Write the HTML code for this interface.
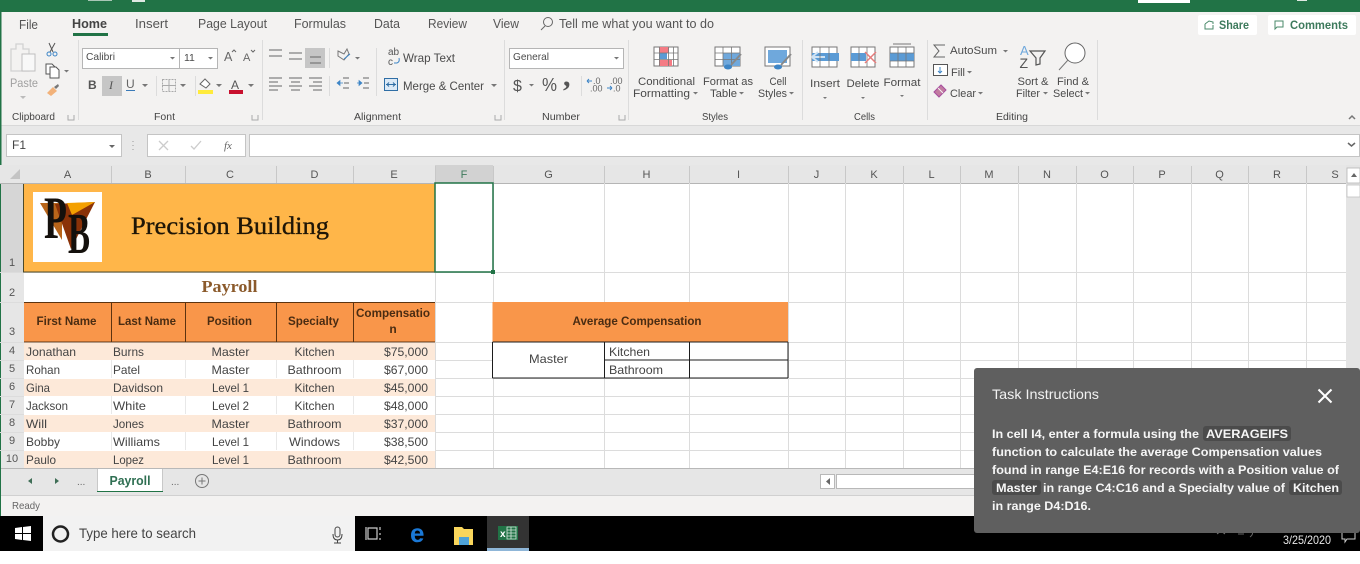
<!DOCTYPE html>
<html><head><meta charset="utf-8"><title>Payroll</title>
<style>
html,body{margin:0;padding:0;background:#fff;width:1360px;height:564px;overflow:hidden}
svg{display:block;position:absolute;left:0;top:0}
text{font-family:"Liberation Sans",Arial,sans-serif;font-size:12px;fill:#444}
.t{font-size:12.5px;fill:#555}
.r{font-size:11px;fill:#4a4a4a}
.g{font-size:10px;fill:#444}
.h{font-size:11px;fill:#555;text-anchor:middle}
.n{font-size:11px;fill:#555;text-anchor:middle}
.c{font-size:12px;fill:#444}
.m{text-anchor:middle}
.e{text-anchor:end}
.b{font-weight:bold}
.th{font-size:12px;font-weight:bold;fill:#4a2c12;text-anchor:middle}
.w{fill:#f6f6f6;font-size:12px;font-weight:bold}
.ic{fill:none;stroke:#666;stroke-width:1}
.ar{fill:#777}
</style></head><body>
<svg width="1360" height="564" viewBox="0 0 1360 564" shape-rendering="geometricPrecision">
<rect width="1360" height="564" fill="#fff"/>
<!-- title bar -->
<rect width="1360" height="12" fill="#217346"/>
<rect x="1138" y="0" width="52" height="3" fill="#fff"/>
<rect x="88" y="0" width="24" height="1" fill="#a9c7b6"/>
<rect x="132" y="0" width="13" height="2" fill="#dfe9e3"/>
<rect x="1297" y="0" width="10" height="1" fill="#dfe9e3"/>
<!-- ribbon -->
<rect x="0" y="12" width="1360" height="113" fill="#f3f2f1"/>
<rect x="0" y="125" width="1360" height="40" fill="#e8e8e8"/>
<rect x="0" y="125" width="1360" height="1" fill="#d8d8d8"/>
<rect x="0" y="12" width="1.5" height="504" fill="#217346"/>
<text class="t" x="19" y="29" textLength="19" lengthAdjust="spacingAndGlyphs">File</text>
<text class="t b" x="72" y="28" textLength="35" lengthAdjust="spacingAndGlyphs" style="fill:#444">Home</text>
<rect x="73" y="33" width="35" height="3" fill="#217346"/>
<text class="t" x="135" y="28" textLength="33" lengthAdjust="spacingAndGlyphs">Insert</text>
<text class="t" x="198" y="28" textLength="69" lengthAdjust="spacingAndGlyphs">Page Layout</text>
<text class="t" x="294" y="28" textLength="52" lengthAdjust="spacingAndGlyphs">Formulas</text>
<text class="t" x="374" y="28" textLength="26" lengthAdjust="spacingAndGlyphs">Data</text>
<text class="t" x="428" y="28" textLength="39" lengthAdjust="spacingAndGlyphs">Review</text>
<text class="t" x="493" y="28" textLength="26" lengthAdjust="spacingAndGlyphs">View</text>
<circle cx="548" cy="22" r="4.500" class="ic"/><path d="M545 26l-4 4" class="ic"/>
<text class="t" x="559" y="28" textLength="155" lengthAdjust="spacingAndGlyphs">Tell me what you want to do</text>
<!-- share/comments -->
<rect x="1198" y="15" width="59" height="20" rx="2" fill="#fff"/>
<path d="M1205 24l4-3 4 1v2M1205 24v5h8v-4" fill="none" stroke="#4a8a6a"/>
<text class="r b" x="1219" y="29" textLength="30" lengthAdjust="spacingAndGlyphs" style="fill:#3d7a5c;font-size:11.500px">Share</text>
<rect x="1268" y="15" width="88" height="20" rx="2" fill="#fff"/>
<path d="M1275 21h8v6h-6l-2 2z" fill="none" stroke="#4a8a6a"/>
<text class="r b" x="1290" y="29" textLength="58" lengthAdjust="spacingAndGlyphs" style="fill:#3d7a5c;font-size:11.500px">Comments</text>
<!-- separators -->
<g fill="#dcdcdc">
<rect x="78" y="40" width="1" height="80"/><rect x="262" y="40" width="1" height="80"/><rect x="504" y="40" width="1" height="80"/>
<rect x="628" y="40" width="1" height="80"/><rect x="802" y="40" width="1" height="80"/><rect x="927" y="40" width="1" height="80"/><rect x="1097" y="40" width="1" height="80"/>
<rect x="329" y="48" width="1" height="20"/><rect x="329" y="76" width="1" height="20"/><rect x="376" y="48" width="1" height="48"/>
<rect x="156" y="76" width="1" height="20"/><rect x="195" y="76" width="1" height="20"/><rect x="581" y="76" width="1" height="20"/>
</g>
<!-- clipboard -->
<path d="M11 49h5v-5h7v5h6v22H11z" fill="none" stroke="#d2d2d2" stroke-width="1.300"/>
<rect x="22" y="54" width="13" height="17" fill="#f8f8f8" stroke="#bfbfbf"/>
<text class="r" x="10" y="87" textLength="28" lengthAdjust="spacingAndGlyphs" style="fill:#a0a0a0;font-size:12px">Paste</text>
<path d="M20 96h6l-3 3z" fill="#bbb"/>
<path d="M49 43l4 9M55 43l-5 9" stroke="#555" fill="none"/><circle cx="49" cy="54" r="2" fill="none" stroke="#3d85c6"/><circle cx="55" cy="54" r="2" fill="none" stroke="#3d85c6"/>
<path d="M46 64h6l3 3v7h-9z" fill="#fff" stroke="#555"/><path d="M50 67h6l3 3v8h-9z" fill="#fff" stroke="#555"/>
<path d="M64 70h5l-2.500 2.500z" class="ar"/>
<path d="M47 93l6-6 4 4-6 5z" fill="#f2b27a"/><path d="M54 87l4-3 1 2-3 3z" fill="#777"/>
<text class="g" x="12" y="120" textLength="43" lengthAdjust="spacingAndGlyphs">Clipboard</text>
<path d="M68 115v5h6v-5" fill="none" stroke="#aaa"/>
<!-- font -->
<rect x="82.500" y="48.500" width="135" height="20" fill="#fff" stroke="#b5b5b5"/>
<rect x="179" y="49" width="1" height="19" fill="#b5b5b5"/>
<text class="r" x="86" y="60" textLength="29" lengthAdjust="spacingAndGlyphs" style="font-size:10.500px">Calibri</text>
<text class="r" x="184" y="61" style="font-size:10.500px">11</text>
<path d="M170 57h5l-2.500 2.500zM208 57h5l-2.500 2.500z" class="ar"/>
<text x="224" y="61" style="font-size:12.500px;fill:#666">A</text><path d="M232 52l2-2 2 2" class="ic"/>
<text x="243" y="61" style="font-size:11px;fill:#666">A</text><path d="M251 50l2 2 2-2" class="ic"/>
<text x="88" y="89" class="b" style="font-size:12px;fill:#555">B</text>
<rect x="102" y="76" width="20" height="20" fill="#c6c6c6"/>
<text x="109" y="89" style="font-size:12px;font-style:italic;font-family:'Liberation Serif',serif;fill:#555">I</text>
<text x="126" y="88" style="font-size:12px;fill:#666">U</text><rect x="126" y="90" width="9" height="1" fill="#3a7ab8"/>
<path d="M142 84h6l-3 3zM180 84h6l-3 3zM216 84h6l-3 3zM248 84h6l-3 3z" class="ar"/>
<rect x="162.500" y="79.500" width="13" height="12" fill="none" stroke="#aaa" stroke-dasharray="2 1"/><path d="M169 80v12M162 85.500h14" stroke="#aaa"/>
<rect x="198" y="90" width="15" height="4" fill="#ffeb3b"/>
<path d="M200 84l5-5 5 5-4 4z" fill="#fff" stroke="#666"/>
<text x="231" y="89" style="font-size:12px;fill:#555">A</text><rect x="229" y="90" width="14" height="4" fill="#c8102e"/>
<text class="g m" x="164.500" y="120" textLength="21" lengthAdjust="spacingAndGlyphs">Font</text>
<path d="M252 115v5h6v-5" fill="none" stroke="#aaa"/>
<!-- alignment -->
<rect x="305" y="48" width="20" height="20" fill="#c6c6c6"/>
<g stroke="#666" stroke-width="1.100">
<path d="M269 50h13M269 56h13M289 53h13M289 59h13M310 57h11M310 63h11"/>
<path d="M269 78h13M269 82h9M269 86h13M269 90h9"/>
<path d="M289 78h13M291 82h9M289 86h13M291 90h9"/>
<path d="M309 78h13M313 82h9M309 86h13M313 90h9"/>
<path d="M343 78h6M344 83h5M343 88h6M363 78h6M364 83h5M363 88h6"/>
</g>
<path d="M337 83l3-2.500v5zM340 83h3M357 83h3M362 83l-3-2.500v5z" fill="#3d85c6" stroke="#3d85c6" stroke-width=".7"/>
<path d="M338 51l6 3 3-5 2 5-5 6-6-4z" fill="none" stroke="#777"/><path d="M344 59l6-5" stroke="#3d85c6"/>
<path d="M355 57h5l-2.500 2.500z" class="ar"/>
<text x="388" y="55" style="font-size:10px;fill:#555">ab</text><text x="388" y="65" style="font-size:10px;fill:#555">c</text>
<path d="M394 63h3q3-1 2-5" fill="none" stroke="#3d85c6"/>
<text class="r" x="403" y="62" textLength="52" lengthAdjust="spacingAndGlyphs" style="font-size:12px">Wrap Text</text>
<rect x="384.500" y="78.500" width="13" height="12" fill="#dbe9f6" stroke="#2f6ea5"/><path d="M386 84.500h10M387 84.500l2-2M387 84.500l2 2M395 84.500l-2-2M395 84.500l-2 2" stroke="#2f6ea5" fill="none"/>
<text class="r" x="403" y="90" textLength="81" lengthAdjust="spacingAndGlyphs" style="font-size:12px">Merge &amp; Center</text>
<path d="M491 84h6l-3 3z" class="ar"/>
<text class="g m" x="377.500" y="120" textLength="47" lengthAdjust="spacingAndGlyphs">Alignment</text>
<path d="M495 115v5h6v-5" fill="none" stroke="#aaa"/>
<!-- number -->
<rect x="509.500" y="48.500" width="114" height="20" fill="#fff" stroke="#b5b5b5"/>
<text class="r" x="513" y="60" textLength="36" lengthAdjust="spacingAndGlyphs" style="font-size:10.500px">General</text>
<path d="M614 57h5l-2.500 2.500z" class="ar"/>
<text x="513" y="91" style="font-size:16px;fill:#555">$</text>
<path d="M529 84h5l-2.500 2.500z" class="ar"/>
<text x="542" y="91" style="font-size:18px;fill:#555" textLength="15" lengthAdjust="spacingAndGlyphs">%</text>
<text x="563" y="86" class="b" style="font-size:30px;fill:#555;font-family:'Liberation Serif',serif">,</text>
<text x="593" y="84" style="font-size:9px;fill:#666">.0</text><text x="590" y="91.500" style="font-size:9px;fill:#666">.00</text>
<path d="M587 81h5M587 81l2-2M587 81l2 2" stroke="#3d85c6" fill="none"/>
<text x="610" y="84" style="font-size:9px;fill:#666">.00</text><text x="613" y="91.500" style="font-size:9px;fill:#666">.0</text>
<path d="M607 88h5M612 88l-2-2M612 88l-2 2" stroke="#3d85c6" fill="none"/>
<text class="g m" x="561" y="120" textLength="38" lengthAdjust="spacingAndGlyphs">Number</text>
<path d="M619 115v5h6v-5" fill="none" stroke="#aaa"/>
<!-- styles -->
<rect x="654" y="47" width="24" height="19" fill="#fff" stroke="#777"/>
<rect x="659" y="47" width="10" height="6" fill="#f47b84"/><rect x="659" y="53" width="8" height="6" fill="#5b9bd5"/><rect x="659" y="60" width="13" height="6" fill="#f47b84"/>
<path d="M654.500 53h24M654.500 59.500h24M659.500 47v19M668.500 47v19M673.500 47v19" stroke="#777" fill="none" stroke-width=".8"/>
<text class="r m" x="666.500" y="85" textLength="57" lengthAdjust="spacingAndGlyphs">Conditional</text>
<text class="r" x="633" y="97" textLength="57" lengthAdjust="spacingAndGlyphs">Formatting</text><path d="M693 92h5l-2.500 2.500z" class="ar"/>
<rect x="715" y="47" width="25" height="19" fill="#fff" stroke="#777"/><rect x="723" y="53" width="17" height="13" fill="#6fa8dc"/>
<path d="M715 53h25M715 59.500h25M723 47v19M731.500 47v19" stroke="#777" fill="none" stroke-width=".8"/>
<path d="M741 54l-10 11" stroke="#888" stroke-width="2"/><ellipse cx="728" cy="67" rx="4" ry="2.500" fill="#3d85c6"/>
<text class="r m" x="728" y="85" textLength="50" lengthAdjust="spacingAndGlyphs">Format as</text>
<text class="r" x="710" y="97" textLength="27" lengthAdjust="spacingAndGlyphs">Table</text><path d="M739 92h5l-2.500 2.500z" class="ar"/>
<rect x="765" y="47" width="25" height="19" fill="#fff" stroke="#777"/><rect x="768" y="50" width="19" height="13" fill="#6fa8dc"/>
<path d="M791 54l-10 11" stroke="#888" stroke-width="2"/><ellipse cx="778" cy="67" rx="4" ry="2.500" fill="#3d85c6"/>
<text class="r m" x="778" y="85" textLength="17" lengthAdjust="spacingAndGlyphs">Cell</text>
<text class="r" x="758" y="97" textLength="29" lengthAdjust="spacingAndGlyphs">Styles</text><path d="M789 92h5l-2.500 2.500z" class="ar"/>
<text class="g m" x="715" y="120" textLength="26" lengthAdjust="spacingAndGlyphs">Styles</text>
<!-- cells -->
<rect x="812" y="47" width="25" height="20" fill="#fff" stroke="#777"/><rect x="812" y="53" width="27" height="8" fill="#5b9bd5"/>
<path d="M812 57h13M812 57l6-5M812 57l6 5" stroke="#cfe2f3" stroke-width="2" fill="none"/>
<path d="M820 47v20M829 47v20" stroke="#777" stroke-width=".8"/>
<text class="r m" x="825" y="87" textLength="30" lengthAdjust="spacingAndGlyphs">Insert</text><path d="M823 97h4l-2 2z" class="ar"/>
<rect x="851" y="47" width="24" height="20" fill="#fff" stroke="#777"/><rect x="851" y="53" width="15" height="8" fill="#5b9bd5"/>
<path d="M859 47v20M867 47v20" stroke="#777" stroke-width=".8"/>
<path d="M865 52l11 11M876 52l-11 11" stroke="#e57c7c" stroke-width="1.500"/>
<text class="r m" x="863" y="87" textLength="33" lengthAdjust="spacingAndGlyphs">Delete</text><path d="M861 97h4l-2 2z" class="ar"/>
<rect x="890" y="47" width="24" height="20" fill="#fff" stroke="#777"/><rect x="890" y="53" width="24" height="8" fill="#5b9bd5"/>
<path d="M898 47v20M906 47v20M890 53h24M890 61h24" stroke="#777" stroke-width=".8"/><path d="M893 44h18" stroke="#777"/>
<text class="r m" x="902" y="86" textLength="37" lengthAdjust="spacingAndGlyphs">Format</text><path d="M900 95h4l-2 2z" class="ar"/>
<text class="g m" x="864.500" y="120" textLength="21" lengthAdjust="spacingAndGlyphs">Cells</text>
<!-- editing -->
<path d="M945 45h-11l5 6-5 6h11" fill="none" stroke="#666"/>
<text class="r" x="950" y="54" textLength="47" lengthAdjust="spacingAndGlyphs">AutoSum</text><path d="M1003 50h5l-2.500 2.500z" class="ar"/>
<rect x="933.500" y="64.500" width="14" height="11" fill="#fff" stroke="#555"/><path d="M940 67v6M938 71l2 2 2-2" stroke="#3d85c6" fill="none"/>
<text class="r" x="951" y="76" textLength="14" lengthAdjust="spacingAndGlyphs">Fill</text><path d="M967 71h5l-2.500 2.500z" class="ar"/>
<path d="M934 92l7-7 5 5-7 7z" fill="#c27ba0" stroke="#a64d9e"/><path d="M938 88l5 5" stroke="#f3f2f1"/>
<text class="r" x="950" y="97" textLength="26" lengthAdjust="spacingAndGlyphs">Clear</text><path d="M978 92h5l-2.500 2.500z" class="ar"/>
<text x="1020" y="55" style="font-size:13px;fill:#6fa8dc">A</text><text x="1019.500" y="68" style="font-size:14px;fill:#555">Z</text>
<path d="M1030 51h15l-5 7v6l-4 1v-7z" fill="none" stroke="#555" stroke-width="1.200"/>
<circle cx="1075" cy="53" r="10" fill="#fff" stroke="#666"/><path d="M1068 60l-9 10" stroke="#777"/>
<text class="r m" x="1033" y="85" textLength="31" lengthAdjust="spacingAndGlyphs">Sort &amp;</text>
<text class="r" x="1016" y="97" textLength="24" lengthAdjust="spacingAndGlyphs">Filter</text><path d="M1043 92h5l-2.500 2.500z" class="ar"/>
<text class="r m" x="1073" y="85" textLength="32" lengthAdjust="spacingAndGlyphs">Find &amp;</text>
<text class="r" x="1053" y="97" textLength="30" lengthAdjust="spacingAndGlyphs">Select</text><path d="M1085 92h5l-2.500 2.500z" class="ar"/>
<text class="g" x="996" y="120" textLength="32" lengthAdjust="spacingAndGlyphs">Editing</text>
<path d="M1349 119l3-3 3 3" fill="none" stroke="#777" stroke-width="1.500"/>
<!-- formula bar -->
<rect x="6.500" y="134.500" width="115" height="22" fill="#fff" stroke="#c4c4c4"/>
<text x="12" y="149" style="font-size:12px;fill:#444">F1</text><path d="M109 145h6l-3 3z" fill="#666"/>
<path d="M133 141v1M133 145v1M133 149v1" stroke="#999"/>
<rect x="147.500" y="134.500" width="98" height="22" fill="#fff" stroke="#c4c4c4"/>
<path d="M159 141l9 9M168 141l-9 9" stroke="#ccc" stroke-width="1.300"/><path d="M191 146l3 3 7-8" fill="none" stroke="#ccc" stroke-width="1.300"/>
<text x="224" y="149" style="font-size:11px;font-style:italic;font-family:'Liberation Serif',serif;fill:#666">fx</text>
<rect x="249.500" y="134.500" width="1110" height="22" fill="#fff" stroke="#c4c4c4"/>
<path d="M1348 143l3.500 3 3.500-3" fill="none" stroke="#666" stroke-width="1.500"/>
<!-- headers -->
<rect x="0" y="165" width="1360" height="18" fill="#e6e6e6"/>
<rect x="1" y="165" width="23" height="304" fill="#e6e6e6"/>
<rect x="435" y="165" width="58" height="18" fill="#d2d2d2"/>
<rect x="1" y="183" width="23" height="89" fill="#d6d6d6"/>
<path d="M20 169v10h-10z" fill="#c4c4c4"/>
<rect x="0" y="183" width="1346" height="1" fill="#b5b5b5"/>
<g fill="#c8c8c8">
<rect x="111" y="166" width="1" height="17"/><rect x="185" y="166" width="1" height="17"/><rect x="276" y="166" width="1" height="17"/><rect x="353" y="166" width="1" height="17"/><rect x="435" y="166" width="1" height="17"/><rect x="493" y="166" width="1" height="17"/><rect x="604" y="166" width="1" height="17"/><rect x="689" y="166" width="1" height="17"/><rect x="788" y="166" width="1" height="17"/><rect x="845" y="166" width="1" height="17"/><rect x="903" y="166" width="1" height="17"/><rect x="960" y="166" width="1" height="17"/><rect x="1018" y="166" width="1" height="17"/><rect x="1076" y="166" width="1" height="17"/><rect x="1133" y="166" width="1" height="17"/><rect x="1191" y="166" width="1" height="17"/><rect x="1248" y="166" width="1" height="17"/><rect x="1306" y="166" width="1" height="17"/>
</g>
<text class="h" x="67.500" y="178">A</text><text class="h" x="148" y="178">B</text><text class="h" x="230" y="178">C</text><text class="h" x="314.500" y="178">D</text><text class="h" x="394" y="178">E</text><text class="h" x="464" y="178" style="fill:#3f7a5c">F</text><text class="h" x="548.500" y="178">G</text><text class="h" x="646.500" y="178">H</text><text class="h" x="738.500" y="178">I</text><text class="h" x="816.500" y="178">J</text><text class="h" x="874" y="178">K</text><text class="h" x="931.500" y="178">L</text><text class="h" x="989" y="178">M</text><text class="h" x="1047" y="178">N</text><text class="h" x="1104.500" y="178">O</text><text class="h" x="1162" y="178">P</text><text class="h" x="1219.500" y="178">Q</text><text class="h" x="1277" y="178">R</text><text class="h" x="1335" y="178">S</text>
<text class="n" x="12" y="266">1</text><text class="n" x="12" y="296">2</text><text class="n" x="12" y="335">3</text><text class="n" x="12" y="354">4</text><text class="n" x="12" y="372">5</text><text class="n" x="12" y="390">6</text><text class="n" x="12" y="408">7</text><text class="n" x="12" y="426">8</text><text class="n" x="12" y="444">9</text><text class="n" x="12" y="462">10</text>
<!-- grid -->
<g stroke="#dcdcdc" stroke-width="1" shape-rendering="crispEdges">
<path d="M0 272.500H24M0 302.500H24M0 342.500H24M0 360.500H24M0 378.500H24M0 396.500H24M0 414.500H24M0 432.500H24M0 450.500H24"/>
<path d="M435 272.500H1346M435 302.500H1346M435 342.500H1346M435 360.500H1346M435 378.500H1346M435 396.500H1346M435 414.500H1346M435 432.500H1346M435 450.500H1346M24 272.500H435"/>
<path d="M435.500 272V468M493.500 183V468M604.500 183V468M689.500 183V468M788.500 183V468M845.500 183V468M903.500 183V468M960.500 183V468M1018.500 183V468M1076.500 183V468M1133.500 183V468M1191.500 183V468M1248.500 183V468M1306.500 183V468"/>
</g>
<!-- title band -->
<rect x="24" y="184" width="411" height="88" fill="#ffb649"/>
<path d="M23.500 184v88h411.500" fill="none" stroke="#4c4a2a"/>
<rect x="33" y="192" width="69" height="70" fill="#fff"/>
<path d="M40 203H62V240Z" fill="#b8651a"/>
<path d="M55 204L95 202L71 249Z" fill="#8a3208"/>
<path d="M67 203L95 202L72 215Z" fill="#f4a000"/>
<text x="44" y="238" textLength="23" lengthAdjust="spacingAndGlyphs" style="font-family:'Liberation Serif',serif;font-weight:bold;font-size:60px;fill:#14100c">P</text>
<text x="68" y="253" textLength="22" lengthAdjust="spacingAndGlyphs" style="font-family:'Liberation Serif',serif;font-weight:bold;font-size:58px;fill:#14100c">B</text>
<text x="131" y="234" textLength="198" lengthAdjust="spacingAndGlyphs" style="font-family:'Liberation Serif',serif;font-size:25px;fill:#1f1607;stroke:#1f1607;stroke-width:.35px">Precision Building</text>
<text class="m b" x="229.500" y="292" textLength="56" lengthAdjust="spacingAndGlyphs" style="font-family:'Liberation Serif',serif;font-size:17px;fill:#8b5a2b">Payroll</text>
<!-- selected F1 -->
<rect x="435" y="183" width="58" height="89" fill="#fff" stroke="#217346" stroke-width="1.500"/>
<rect x="491" y="270" width="4" height="4" fill="#217346"/>
<!-- table header -->
<rect x="24" y="302" width="411" height="40" fill="#f9964a"/>
<path d="M24 302.500H435M24 342H435M111.500 302V342M185.500 302V342M276.500 302V342M353.500 302V342" stroke="#5c3310" stroke-width="1" fill="none"/>
<text class="th" x="66.500" y="325" textLength="60" lengthAdjust="spacingAndGlyphs">First Name</text>
<text class="th" x="147" y="325" textLength="58" lengthAdjust="spacingAndGlyphs">Last Name</text>
<text class="th" x="229.500" y="325" textLength="45" lengthAdjust="spacingAndGlyphs">Position</text>
<text class="th" x="313.500" y="325" textLength="51" lengthAdjust="spacingAndGlyphs">Specialty</text>
<text class="th" x="393" y="317" textLength="74" lengthAdjust="spacingAndGlyphs">Compensatio</text>
<text class="th" x="393" y="333">n</text>
<!-- rows -->
<rect x="24" y="343" width="411" height="17" fill="#fde9d9"/>
<rect x="24" y="379" width="411" height="17" fill="#fde9d9"/>
<rect x="24" y="415" width="411" height="17" fill="#fde9d9"/>
<rect x="24" y="451" width="411" height="17" fill="#fde9d9"/>
<g fill="#e8e8e8"><rect x="111" y="360" width="1" height="18"/><rect x="185" y="360" width="1" height="18"/><rect x="276" y="360" width="1" height="18"/><rect x="353" y="360" width="1" height="18"/><rect x="111" y="396" width="1" height="18"/><rect x="185" y="396" width="1" height="18"/><rect x="276" y="396" width="1" height="18"/><rect x="353" y="396" width="1" height="18"/><rect x="111" y="432" width="1" height="18"/><rect x="185" y="432" width="1" height="18"/><rect x="276" y="432" width="1" height="18"/><rect x="353" y="432" width="1" height="18"/></g>
<g class="rows">
<text class="c" x="26" y="356" textLength="50" lengthAdjust="spacingAndGlyphs">Jonathan</text><text class="c" x="113" y="356" textLength="31" lengthAdjust="spacingAndGlyphs">Burns</text><text class="c m" x="230.500" y="356" textLength="38" lengthAdjust="spacingAndGlyphs">Master</text><text class="c m" x="314.500" y="356" textLength="40" lengthAdjust="spacingAndGlyphs">Kitchen</text><text class="c e" x="428" y="356" textLength="44" lengthAdjust="spacingAndGlyphs">$75,000</text>
<text class="c" x="26" y="374" textLength="34" lengthAdjust="spacingAndGlyphs">Rohan</text><text class="c" x="113" y="374" textLength="27" lengthAdjust="spacingAndGlyphs">Patel</text><text class="c m" x="230.500" y="374" textLength="38" lengthAdjust="spacingAndGlyphs">Master</text><text class="c m" x="314.500" y="374" textLength="54" lengthAdjust="spacingAndGlyphs">Bathroom</text><text class="c e" x="428" y="374" textLength="44" lengthAdjust="spacingAndGlyphs">$67,000</text>
<text class="c" x="26" y="392" textLength="24" lengthAdjust="spacingAndGlyphs">Gina</text><text class="c" x="113" y="392" textLength="50" lengthAdjust="spacingAndGlyphs">Davidson</text><text class="c m" x="230.500" y="392" textLength="37" lengthAdjust="spacingAndGlyphs">Level 1</text><text class="c m" x="314.500" y="392" textLength="40" lengthAdjust="spacingAndGlyphs">Kitchen</text><text class="c e" x="428" y="392" textLength="44" lengthAdjust="spacingAndGlyphs">$45,000</text>
<text class="c" x="26" y="410" textLength="42" lengthAdjust="spacingAndGlyphs">Jackson</text><text class="c" x="113" y="410" textLength="33" lengthAdjust="spacingAndGlyphs">White</text><text class="c m" x="230.500" y="410" textLength="37" lengthAdjust="spacingAndGlyphs">Level 2</text><text class="c m" x="314.500" y="410" textLength="40" lengthAdjust="spacingAndGlyphs">Kitchen</text><text class="c e" x="428" y="410" textLength="44" lengthAdjust="spacingAndGlyphs">$48,000</text>
<text class="c" x="26" y="428" textLength="21" lengthAdjust="spacingAndGlyphs">Will</text><text class="c" x="113" y="428" textLength="31" lengthAdjust="spacingAndGlyphs">Jones</text><text class="c m" x="230.500" y="428" textLength="38" lengthAdjust="spacingAndGlyphs">Master</text><text class="c m" x="314.500" y="428" textLength="54" lengthAdjust="spacingAndGlyphs">Bathroom</text><text class="c e" x="428" y="428" textLength="44" lengthAdjust="spacingAndGlyphs">$37,000</text>
<text class="c" x="26" y="446" textLength="34" lengthAdjust="spacingAndGlyphs">Bobby</text><text class="c" x="113" y="446" textLength="47" lengthAdjust="spacingAndGlyphs">Williams</text><text class="c m" x="230.500" y="446" textLength="37" lengthAdjust="spacingAndGlyphs">Level 1</text><text class="c m" x="314.500" y="446" textLength="51" lengthAdjust="spacingAndGlyphs">Windows</text><text class="c e" x="428" y="446" textLength="44" lengthAdjust="spacingAndGlyphs">$38,500</text>
<text class="c" x="26" y="464" textLength="30" lengthAdjust="spacingAndGlyphs">Paulo</text><text class="c" x="113" y="464" textLength="31" lengthAdjust="spacingAndGlyphs">Lopez</text><text class="c m" x="230.500" y="464" textLength="37" lengthAdjust="spacingAndGlyphs">Level 1</text><text class="c m" x="314.500" y="464" textLength="54" lengthAdjust="spacingAndGlyphs">Bathroom</text><text class="c e" x="428" y="464" textLength="44" lengthAdjust="spacingAndGlyphs">$42,500</text>
</g>
<!-- average table -->
<rect x="492.500" y="302" width="295.500" height="40" fill="#f9964a"/>
<text class="th" x="637" y="325" textLength="129" lengthAdjust="spacingAndGlyphs">Average Compensation</text>
<rect x="493" y="342" width="295" height="36" fill="#fff"/>
<path d="M492.500 342H788M604.500 360H788M492.500 378H788M492.500 342V378M604.500 342V378M689.500 342V378M788 342V378" stroke="#1c1c1c" fill="none" stroke-width="1"/>
<text class="c m" x="548.500" y="363" textLength="39" lengthAdjust="spacingAndGlyphs">Master</text>
<text class="c" x="609" y="356" textLength="41" lengthAdjust="spacingAndGlyphs">Kitchen</text>
<text class="c" x="609" y="374" textLength="54" lengthAdjust="spacingAndGlyphs">Bathroom</text>
<!-- scrollbar v -->
<rect x="1346" y="165" width="14" height="304" fill="#e4e4e4"/>
<rect x="1347" y="168" width="13" height="15" fill="#fff" stroke="#b5b5b5" stroke-width=".8"/><path d="M1351 177l3-4 3 4z" fill="#666"/>
<rect x="1347" y="185" width="13" height="12" fill="#fff" stroke="#c0c0c0" stroke-width=".8"/>
<!-- tab bar -->
<rect x="1" y="469" width="1359" height="26" fill="#e6e6e6"/>
<rect x="1" y="468" width="1359" height="1" fill="#b8b8b8"/>
<path d="M32 478v6l-4-3zM55 478v6l4-3z" fill="#3f6e56"/>
<text x="77" y="485" style="font-size:10px;fill:#666">...</text>
<rect x="97" y="469" width="66" height="23" fill="#fff"/>
<rect x="97" y="491" width="66" height="1" fill="#217346"/><rect x="97" y="469" width="1" height="22" fill="#c8c8c8"/><rect x="162" y="469" width="1" height="22" fill="#c8c8c8"/>
<text x="130" y="485" class="b m" textLength="41" lengthAdjust="spacingAndGlyphs" style="font-size:12.500px;fill:#2f6f52">Payroll</text>
<text x="171" y="485" style="font-size:10px;fill:#666">...</text>
<circle cx="202" cy="481" r="6.500" fill="none" stroke="#777"/><path d="M198.500 481h7M202 477.500v7" stroke="#777"/>
<rect x="820.500" y="474.500" width="14" height="14" fill="#fff" stroke="#b8b8b8"/><path d="M830 478v7l-4-3.500z" fill="#666"/>
<rect x="836.500" y="474.500" width="140" height="14" fill="#fff" stroke="#b8b8b8"/>
<!-- status bar -->
<rect x="1" y="495" width="1359" height="21" fill="#f3f2f1"/>
<rect x="1" y="495" width="1359" height="1" fill="#d0d0d0"/>
<text x="12" y="509" textLength="28" lengthAdjust="spacingAndGlyphs" style="font-size:10.500px;fill:#666">Ready</text>
<!-- taskbar -->
<rect x="0" y="516" width="1360" height="35" fill="#000"/>
<path d="M15 528l7-1v6h-7zM23 527l8-1v7h-8zM15 534h7v6l-7-1zM23 534h8v7l-8-1z" fill="#fff"/>
<rect x="43" y="516" width="312" height="35" fill="#f2f2f2"/>
<circle cx="60.500" cy="534" r="7.500" fill="none" stroke="#222" stroke-width="2.500"/>
<text x="79" y="538" textLength="117" lengthAdjust="spacingAndGlyphs" style="font-size:14px;fill:#444">Type here to search</text>
<rect x="335" y="527" width="5" height="10" rx="2.500" fill="none" stroke="#444"/><path d="M333 534q0 6 4.500 6t4.500-6M337.500 540v3M334 543h7" fill="none" stroke="#444"/>
<path d="M368 528h9v11h-9zM366 527v13M380 527v3M380 533v2M380 538v2" fill="none" stroke="#ccc" stroke-width="1.200"/>
<text x="410" y="542" class="b" style="font-size:26px;fill:#1a78d6">e</text>
<path d="M454 527h8l2 2h9v16h-19z" fill="#f9d65c"/><rect x="459" y="537" width="10" height="8" fill="#4fa3d8"/>
<rect x="487" y="516" width="42" height="35" fill="#333"/>
<rect x="487" y="548" width="42" height="3" fill="#8fb6d8"/>
<rect x="498" y="526" width="20" height="14" fill="#217346"/>
<text x="500" y="537" class="b" style="font-size:10px;fill:#fff">x</text>
<path d="M507 527h9v12h-9zM507 530h9M507 533h9M507 536h9M511 527v12" fill="none" stroke="#d6e6dc" stroke-width=".8"/>
<path d="M1217 534l4-3 4 3" fill="none" stroke="#777"/><path d="M1238 534h6M1250 530q5 3 0 7" fill="none" stroke="#666"/>
<text x="1283" y="544" textLength="48" lengthAdjust="spacingAndGlyphs" style="font-size:12px;fill:#e8e8e8">3/25/2020</text>
<path d="M1342 531h13v8h-8l-2 3v-3h-3z" fill="none" stroke="#ccc"/>
<!-- task panel -->
<rect x="974" y="368" width="386" height="165" rx="3" fill="#5f5f5f"/>
<text x="992" y="399" textLength="107" lengthAdjust="spacingAndGlyphs" style="font-size:14px;fill:#f2f2f2">Task Instructions</text>
<path d="M1318.500 389.500l13 13M1331.500 389.500l-13 13" stroke="#fff" stroke-width="2"/>
<rect x="1203" y="426" width="88" height="15" rx="3" fill="#4b4b4b"/>
<rect x="992" y="480" width="49" height="15" rx="3" fill="#4b4b4b"/>
<rect x="1289" y="480" width="53" height="15" rx="3" fill="#4b4b4b"/>
<text class="w" x="992" y="438" textLength="207" lengthAdjust="spacingAndGlyphs">In cell I4, enter a formula using the</text>
<text class="w" x="1206" y="438" textLength="82" lengthAdjust="spacingAndGlyphs">AVERAGEIFS</text>
<text class="w" x="992" y="456" textLength="330" lengthAdjust="spacingAndGlyphs">function to calculate the average Compensation values</text>
<text class="w" x="992" y="474" textLength="347" lengthAdjust="spacingAndGlyphs">found in range E4:E16 for records with a Position value of</text>
<text class="w" x="996" y="492" textLength="41" lengthAdjust="spacingAndGlyphs">Master</text>
<text class="w" x="1043" y="492" textLength="242" lengthAdjust="spacingAndGlyphs">in range C4:C16 and a Specialty value of</text>
<text class="w" x="1293" y="492" textLength="46" lengthAdjust="spacingAndGlyphs">Kitchen</text>
<text class="w" x="992" y="510" textLength="99" lengthAdjust="spacingAndGlyphs">in range D4:D16.</text>
</svg>
</body></html>
